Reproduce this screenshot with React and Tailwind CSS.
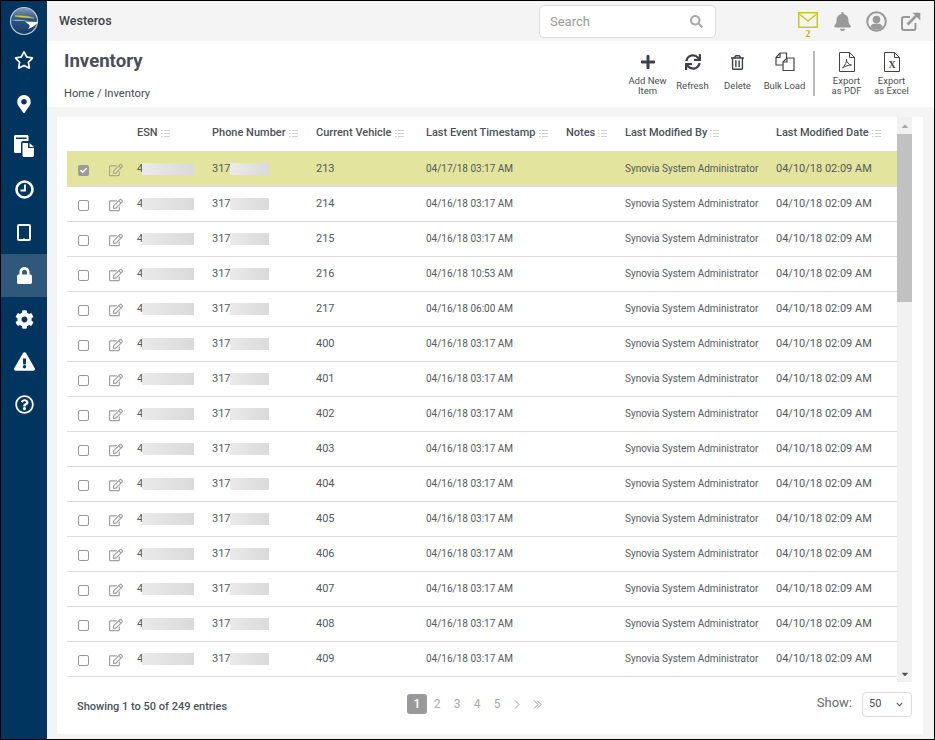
import React from "react";
import {
  FaRegStar, FaMapMarkerAlt, FaLock, FaCog, FaExclamationTriangle, FaRegQuestionCircle,
  FaBell, FaPlus, FaSync, FaRegTrashAlt, FaSearch, FaCheck, FaRegEdit, FaChevronDown, FaCaretUp, FaCaretDown,
} from "react-icons/fa";

const rows = [
  { id: 213, ts: "04/17/18 03:17 AM" },
  { id: 214, ts: "04/16/18 03:17 AM" },
  { id: 215, ts: "04/16/18 03:17 AM" },
  { id: 216, ts: "04/16/18 10:53 AM" },
  { id: 217, ts: "04/16/18 06:00 AM" },
  { id: 400, ts: "04/16/18 03:17 AM" },
  { id: 401, ts: "04/16/18 03:17 AM" },
  { id: 402, ts: "04/16/18 03:17 AM" },
  { id: 403, ts: "04/16/18 03:17 AM" },
  { id: 404, ts: "04/16/18 03:17 AM" },
  { id: 405, ts: "04/16/18 03:17 AM" },
  { id: 406, ts: "04/16/18 03:17 AM" },
  { id: 407, ts: "04/16/18 03:17 AM" },
  { id: 408, ts: "04/16/18 03:17 AM" },
  { id: 409, ts: "04/16/18 03:17 AM" },
];

const columns = [
  { label: "ESN" },
  { label: "Phone Number" },
  { label: "Current Vehicle" },
  { label: "Last Event Timestamp" },
  { label: "Notes" },
  { label: "Last Modified By" },
  { label: "Last Modified Date" },
];

const gridCols = "grid grid-cols-[70px_75px_104px_110px_140px_59px_151px_1fr] items-center";

function Logo() {
  return (
    <svg width="30" height="30" viewBox="0 0 30 30">
      <defs>
        <linearGradient id="globe" x1="0" y1="0" x2="0" y2="1">
          <stop offset="0" stopColor="#8ba0b5" />
          <stop offset="0.4" stopColor="#2f5a85" />
          <stop offset="1" stopColor="#123a63" />
        </linearGradient>
      </defs>
      <circle cx="15" cy="15" r="13.500" fill="url(#globe)" stroke="#b9c6d2" strokeWidth="1.200" />
      <path d="M6 10 C12 9.500 18 10 25 12 C18 11.500 12 11.500 6 10 Z" fill="#c9cf3a" stroke="#c9cf3a" strokeWidth=".6" />
      <path d="M2 14 C8 13.500 13 13.500 19 14.500 C13 15 8 15 2 14 Z" fill="#b9c6d2" />
      <path d="M16 15.500 L29 16 C27 19 24 21 19 23 C21 21 21 19.500 20 18.500 C18.500 17.500 17 16.500 16 15.500 Z" fill="#ffffff" />
    </svg>
  );
}

function DocsIcon() {
  return (
    <svg width="21" height="22" viewBox="0 0 21 22" fill="#fff">
      <path d="M0 1.500 C0 .7 .7 0 1.500 0 H13 C13.800 0 14.500 .7 14.500 1.500 V6 H9 C8 6 7 7 7 8 V18 H1.500 C.7 18 0 17.300 0 16.500 Z" />
      <rect x="2" y="2.500" width="10.500" height="1.500" fill="#00355f" />
      <path d="M8.500 8 H14 V13 H20 V20.500 C20 21.300 19.300 22 18.500 22 H10 C9.200 22 8.500 21.300 8.500 20.500 Z" />
      <path d="M15.500 8 L20 12 H15.500 Z" />
    </svg>
  );
}

function ClockIcon() {
  return (
    <svg width="19" height="19" viewBox="0 0 19 19" fill="none" stroke="#fff">
      <circle cx="9.500" cy="9.500" r="8" strokeWidth="2.600" />
      <path d="M10 4.500 V10.500 H5.500" strokeWidth="1.800" />
    </svg>
  );
}

function TabletIcon() {
  return (
    <svg width="14" height="17" viewBox="0 0 14 17" fill="none" stroke="#fff">
      <rect x="1" y="1" width="12" height="15" rx="1" strokeWidth="2" />
      <path d="M6 15 H8" strokeWidth="1" />
    </svg>
  );
}

function UserIcon() {
  return (
    <svg width="21" height="21" viewBox="0 0 21 21">
      <circle cx="10.500" cy="10.500" r="9.300" fill="#f4f4f4" stroke="#999999" strokeWidth="2" />
      <circle cx="10.500" cy="8.500" r="3.800" fill="#999999" />
      <path d="M4.500 16 C5 13 8 12.500 10.500 12.500 C13 12.500 16 13 16.500 16 C14.500 18 12.500 18.500 10.500 18.500 C8.500 18.500 6.500 18 4.500 16 Z" fill="#999999" />
    </svg>
  );
}

function ExternalIcon() {
  return (
    <svg width="20" height="19" viewBox="0 0 20 19" fill="none" stroke="#999999">
      <path d="M14.500 11 V16 C14.500 17 13.500 18 12.500 18 H3 C2 18 1 17 1 16 V7 C1 6 2 5 3 5 H9" strokeWidth="2" />
      <path d="M6.500 12.500 L16 3" strokeWidth="2.600" />
      <path d="M11.500 .7 H19.300 V8.500 Z" fill="#999999" stroke="none" />
    </svg>
  );
}

function SideIcon({ children, active, nudge }) {
  return (
    <div className={`h-[43px] flex items-center justify-center text-white ${active ? "bg-[#30587a]" : ""} ${nudge || ""}`}>
      {children}
    </div>
  );
}

function Sidebar() {
  return (
    <div className="w-[46px] shrink-0 bg-[#00355f] flex flex-col">
      <div className="h-[38px] flex items-center justify-center pt-[2px]"><Logo /></div>
      <SideIcon nudge="pb-[2px]"><FaRegStar size={20} /></SideIcon>
      <SideIcon><FaMapMarkerAlt size={18} /></SideIcon>
      <SideIcon nudge="pb-[2px]"><DocsIcon /></SideIcon>
      <SideIcon><ClockIcon /></SideIcon>
      <SideIcon><TabletIcon /></SideIcon>
      <SideIcon active><FaLock size={17} /></SideIcon>
      <SideIcon nudge="pt-[2px]"><FaCog size={19} /></SideIcon>
      <SideIcon><FaExclamationTriangle size={21} /></SideIcon>
      <SideIcon><FaRegQuestionCircle size={19} /></SideIcon>
    </div>
  );
}

function TopBar() {
  return (
    <div className="h-[40px] shrink-0 bg-[#f4f4f4] flex items-center pl-[12px]">
      <div className="w-[480px] text-[12.500px] font-medium text-[#3f444b]">Westeros</div>
      <div className="w-[177px] h-[33px] bg-white border border-[#dddddd] rounded-[5px] flex items-center justify-between pl-[10px] pr-[12px]">
        <span className="text-[13px] text-[#999999] pt-[1px]">Search</span>
        <FaSearch size={13} className="text-[#aaaaaa]" />
      </div>
      <div className="ml-[82px] w-[20px] flex flex-col items-center pt-[8px]">
        <svg width="20" height="16" viewBox="0 0 20 16" fill="none" stroke="#c9c926" strokeWidth="1.500">
          <rect x=".75" y=".75" width="18.500" height="14.500" />
          <path d="M.75 1.500 L10 9 L19.250 1.500" />
        </svg>
        <span className="text-[10px] leading-[11px] font-bold font-['Liberation_Serif',serif] text-[#b8b820]">2</span>
      </div>
      <FaBell size={19} className="ml-[15px] text-[#999999]" />
      <span className="ml-[14px]"><UserIcon /></span>
      <span className="ml-[14px]"><ExternalIcon /></span>
    </div>
  );
}

function ToolItem({ icon, label, width }) {
  return (
    <div className={`flex flex-col items-center text-[#4a4f55] ${width}`}>
      <div className="h-[25px] flex items-center justify-center pt-[1px]">{icon}</div>
      <div className="h-[23px] flex items-center text-center text-[9.500px] leading-[10px]">{label}</div>
    </div>
  );
}

function PageIcon({ children }) {
  return (
    <svg width="16" height="20" viewBox="0 0 16 20" fill="none" stroke="#444" strokeWidth="1">
      <path d="M.5 .5 H10.500 L15.500 5.500 V19.500 H.5 Z M10.500 .5 V5.500 H15.500" />
      {children}
    </svg>
  );
}

function BulkIcon() {
  return (
    <svg width="20" height="20" viewBox="0 0 20 20" fill="none" stroke="#444" strokeWidth="1.200">
      <path d="M8 13 H1 V5.500 L5 1 H11.500 V6" />
      <path d="M5 1 V5.500 H1" />
      <path d="M8 18.500 V10 L12 6 H19 V18.500 Z" />
      <path d="M12 6 V10 H8" />
    </svg>
  );
}

function PageHeader() {
  return (
    <div className="h-[66px] shrink-0 bg-white flex pl-[17px]">
      <div className="flex-1 flex flex-col">
        <div className="mt-[7px] h-[26px] text-[18.600px] leading-[26px] font-bold text-[#4a4f57]">Inventory</div>
        <div className="mt-[13px] text-[11.200px] leading-[14px] text-[#444a50]">Home / Inventory</div>
      </div>
      <div className="flex pr-[20px] pt-[8px] items-start">
        <ToolItem width="w-[45px]" icon={<FaPlus size={16} className="text-[#3d4046]" />} label={<span>Add New<br />Item</span>} />
        <ToolItem width="w-[45px]" icon={<FaSync size={16} className="text-[#3d4046]" />} label="Refresh" />
        <ToolItem width="w-[45px]" icon={<FaRegTrashAlt size={15} className="text-[#3d4046]" />} label="Delete" />
        <ToolItem width="w-[49px]" icon={<BulkIcon />} label="Bulk Load" />
        <div className="w-[2px] h-[45px] mt-[2px] ml-[4px] mr-[9px] bg-[#bbbbbb]" />
        <ToolItem width="w-[45px]" icon={<PageIcon><path d="M3.500 16 C6 14 8 9 7.500 7.500 C7.500 10 10 13 12.500 13 C10 13 6 14 3.500 16 Z" /></PageIcon>} label={<span>Export<br />as PDF</span>} />
        <ToolItem width="w-[45px]" icon={<PageIcon><text x="8" y="16" textAnchor="middle" fontSize="10" fontWeight="700" fontFamily="Liberation Serif, serif" fill="#444" stroke="none">X</text></PageIcon>} label={<span>Export<br />as Excel</span>} />
      </div>
    </div>
  );
}

function SortIcon() {
  return (
    <svg width="9" height="7" viewBox="0 0 9 7" fill="none" stroke="#d0d0d0" strokeWidth="1" className="ml-[3px] shrink-0">
      <path d="M0 .5 H1.500 M3 .5 H9 M0 3.500 H1.500 M3 3.500 H9 M0 6.500 H1.500 M3 6.500 H9" />
    </svg>
  );
}

function Blur({ width }) {
  return <span className={`inline-block h-[12px] -ml-[1px] bg-gradient-to-r from-[#eaeaea] to-[#dadada] blur-[0.5px] ${width}`} />;
}

function Row({ row, selected }) {
  return (
    <div className={`${gridCols} h-[35px] border-b border-[#dddddd] text-[#555a60] ${selected ? "bg-[#e3e49d]" : ""}`}>
      <div className="flex items-center pl-[11px] pt-[3px]">
        {selected ? (
          <span className="w-[11px] h-[11px] rounded-[2px] bg-[#9b9b9b] flex items-center justify-center"><FaCheck size={7} className="text-white" /></span>
        ) : (
          <span className="w-[11px] h-[11px] rounded-[2px] border border-[#999999] bg-white" />
        )}
        <FaRegEdit size={14} className={`ml-[20px] -mt-[1px] ${selected ? "text-[#aaa98a]" : "text-[#a0a0a0]"}`} />
      </div>
      <div className="flex items-center text-[11px]"><span>4</span><Blur width="w-[52px]" /></div>
      <div className="flex items-center text-[11px]"><span>317</span><Blur width="w-[39px]" /></div>
      <div className="text-[11px]">{row.id}</div>
      <div className="text-[10px] -mt-[1px]">{row.ts}</div>
      <div />
      <div className="text-[10px] -mt-[1px]">Synovia System Administrator</div>
      <div className="text-[11px]">04/10/18 02:09 AM</div>
    </div>
  );
}

function TableHead() {
  return (
    <div className={`${gridCols} h-[35px] border-b border-[#dddddd] text-[11px] font-medium text-[#4d5259] pb-[2px]`}>
      <div />
      {columns.map((c) => (
        <div key={c.label} className="flex items-center whitespace-nowrap">
          {c.label}
          <SortIcon />
        </div>
      ))}
    </div>
  );
}

function Scrollbar() {
  return (
    <div className="w-[15px] shrink-0 bg-[#f1f1f1] flex flex-col items-center text-[#555555]">
      <div className="h-[17px] flex items-center"><FaCaretUp size={10} className="text-[#a8a8a8]" /></div>
      <div className="w-full h-[168px] bg-[#c1c1c1]" />
      <div className="flex-1" />
      <div className="h-[17px] flex items-center"><FaCaretDown size={10} /></div>
    </div>
  );
}

function Footer() {
  return (
    <div className="flex-1 flex items-center pl-[20px] pr-[11px] pb-[8px]">
      <div className="w-[330px] text-[11px] font-medium text-[#4d5259] pt-[7px]">Showing 1 to 50 of 249 entries</div>
      <div className="flex items-center text-[12px] text-[#a8a8a8]">
        <span className="w-[20px] h-[20px] rounded-[3px] bg-[#999999] text-white font-medium text-[13px] flex items-center justify-center">1</span>
        {["2", "3", "4", "5"].map((p) => (
          <span key={p} className="w-[20px] text-center">{p}</span>
        ))}
        <span className="w-[20px] flex justify-center">
          <svg width="6" height="9" viewBox="0 0 6 9" fill="none" stroke="#999999" strokeWidth="1"><path d="M1 .5 L5 4.500 L1 8.500" /></svg>
        </span>
        <span className="w-[20px] flex justify-center">
          <svg width="9" height="9" viewBox="0 0 9 9" fill="none" stroke="#999999" strokeWidth="1"><path d="M1 .5 L5 4.500 L1 8.500 M4 .5 L8 4.500 L4 8.500" /></svg>
        </span>
      </div>
      <div className="ml-auto flex items-center">
        <span className="text-[13px] text-[#666b70] mr-[10px] -mt-[2px]">Show:</span>
        <div className="w-[50px] h-[25px] border border-[#dddddd] rounded-[4px] flex items-center justify-between pl-[6px] pr-[8px] text-[11px] text-[#4d5259]">
          50
          <FaChevronDown size={7} />
        </div>
      </div>
    </div>
  );
}

export default function App() {
  return (
    <div className="w-[935px] h-[740px] border border-black flex overflow-hidden font-['Roboto',sans-serif]">
      <Sidebar />
      <div className="flex-1 flex flex-col min-w-0 bg-[#f4f4f4]">
        <TopBar />
        <PageHeader />
        <div className="flex-1 pt-[10px] pl-[10px] pr-[11px] pb-[5px] min-h-0">
          <div className="h-full bg-white flex flex-col">
            <div className="h-[565px] shrink-0 flex pl-[10px] pr-[11px]">
              <div className="flex-1 overflow-hidden">
                <TableHead />
                {rows.map((r, i) => (
                  <Row key={r.id} row={r} selected={i === 0} />
                ))}
              </div>
              <Scrollbar />
            </div>
            <Footer />
          </div>
        </div>
      </div>
    </div>
  );
}
